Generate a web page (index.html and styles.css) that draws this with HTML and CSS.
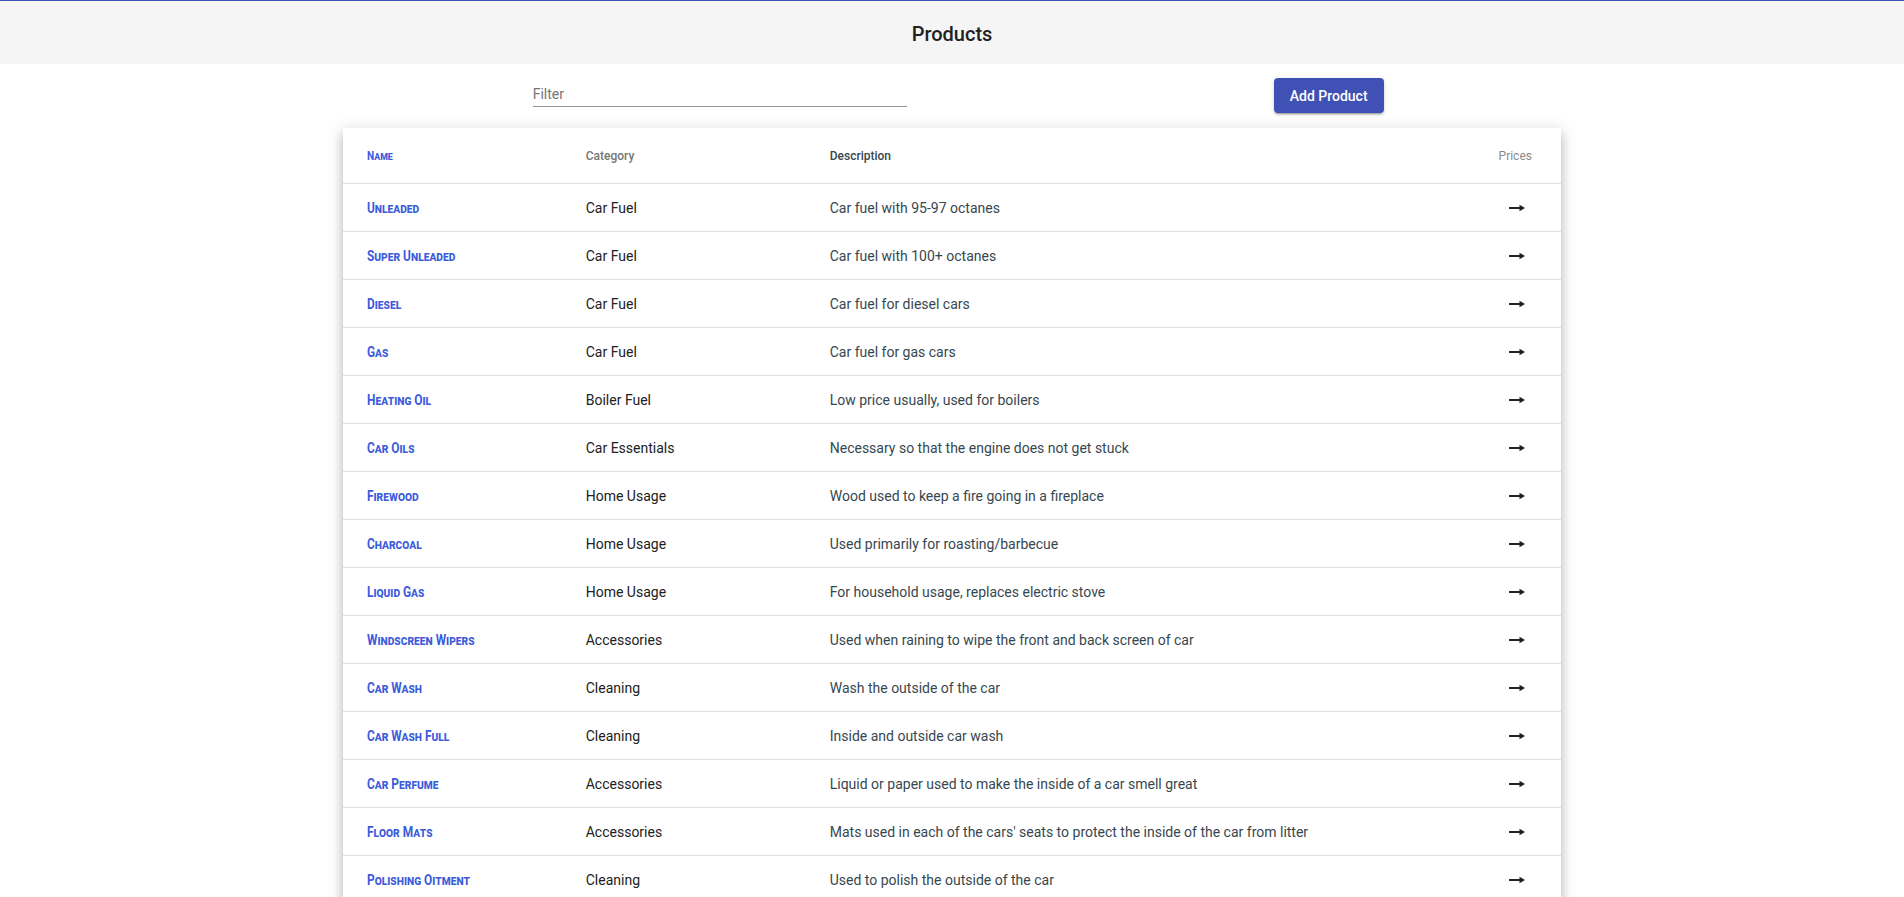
FILE: index.html
```html
<!DOCTYPE html>
<html lang="en">
<head>
<meta charset="utf-8">
<title>Products</title>
<link rel="stylesheet" href="styles.css">
</head>
<body>
<header class="topbar">
  <h1 class="title">Products</h1>
</header>
<div class="toolbar">
  <input class="filter" type="text" placeholder="Filter">
  <button class="add-btn" type="button">Add Product</button>
</div>
<div class="card">
  <div class="row head">
    <div class="c-name"><span class="nm">Name</span></div>
    <div class="c-cat">Category</div>
    <div class="c-desc">Description</div>
    <div class="c-price">Prices</div>
  </div>
  <div class="row"><div class="c-name"><span class="nm">Unleaded</span></div><div class="c-cat">Car Fuel</div><div class="c-desc">Car fuel with 95-97 octanes</div><div class="c-price"><svg class="arrow" viewBox="0 0 16 8"><path d="M0 4H12" /><polygon points="10.5,0.8 16,4 10.5,7.2"/></svg></div></div>
  <div class="row"><div class="c-name"><span class="nm">Super Unleaded</span></div><div class="c-cat">Car Fuel</div><div class="c-desc">Car fuel with 100+ octanes</div><div class="c-price"><svg class="arrow" viewBox="0 0 16 8"><path d="M0 4H12" /><polygon points="10.5,0.8 16,4 10.5,7.2"/></svg></div></div>
  <div class="row"><div class="c-name"><span class="nm">Diesel</span></div><div class="c-cat">Car Fuel</div><div class="c-desc">Car fuel for diesel cars</div><div class="c-price"><svg class="arrow" viewBox="0 0 16 8"><path d="M0 4H12" /><polygon points="10.5,0.8 16,4 10.5,7.2"/></svg></div></div>
  <div class="row"><div class="c-name"><span class="nm">Gas</span></div><div class="c-cat">Car Fuel</div><div class="c-desc">Car fuel for gas cars</div><div class="c-price"><svg class="arrow" viewBox="0 0 16 8"><path d="M0 4H12" /><polygon points="10.5,0.8 16,4 10.5,7.2"/></svg></div></div>
  <div class="row"><div class="c-name"><span class="nm">Heating Oil</span></div><div class="c-cat">Boiler Fuel</div><div class="c-desc">Low price usually, used for boilers</div><div class="c-price"><svg class="arrow" viewBox="0 0 16 8"><path d="M0 4H12" /><polygon points="10.5,0.8 16,4 10.5,7.2"/></svg></div></div>
  <div class="row"><div class="c-name"><span class="nm">Car Oils</span></div><div class="c-cat">Car Essentials</div><div class="c-desc">Necessary so that the engine does not get stuck</div><div class="c-price"><svg class="arrow" viewBox="0 0 16 8"><path d="M0 4H12" /><polygon points="10.5,0.8 16,4 10.5,7.2"/></svg></div></div>
  <div class="row"><div class="c-name"><span class="nm">Firewood</span></div><div class="c-cat">Home Usage</div><div class="c-desc">Wood used to keep a fire going in a fireplace</div><div class="c-price"><svg class="arrow" viewBox="0 0 16 8"><path d="M0 4H12" /><polygon points="10.5,0.8 16,4 10.5,7.2"/></svg></div></div>
  <div class="row"><div class="c-name"><span class="nm">Charcoal</span></div><div class="c-cat">Home Usage</div><div class="c-desc">Used primarily for roasting/barbecue</div><div class="c-price"><svg class="arrow" viewBox="0 0 16 8"><path d="M0 4H12" /><polygon points="10.5,0.8 16,4 10.5,7.2"/></svg></div></div>
  <div class="row"><div class="c-name"><span class="nm">Liquid Gas</span></div><div class="c-cat">Home Usage</div><div class="c-desc">For household usage, replaces electric stove</div><div class="c-price"><svg class="arrow" viewBox="0 0 16 8"><path d="M0 4H12" /><polygon points="10.5,0.8 16,4 10.5,7.2"/></svg></div></div>
  <div class="row"><div class="c-name"><span class="nm">Windscreen Wipers</span></div><div class="c-cat">Accessories</div><div class="c-desc">Used when raining to wipe the front and back screen of car</div><div class="c-price"><svg class="arrow" viewBox="0 0 16 8"><path d="M0 4H12" /><polygon points="10.5,0.8 16,4 10.5,7.2"/></svg></div></div>
  <div class="row"><div class="c-name"><span class="nm">Car Wash</span></div><div class="c-cat">Cleaning</div><div class="c-desc">Wash the outside of the car</div><div class="c-price"><svg class="arrow" viewBox="0 0 16 8"><path d="M0 4H12" /><polygon points="10.5,0.8 16,4 10.5,7.2"/></svg></div></div>
  <div class="row"><div class="c-name"><span class="nm">Car Wash Full</span></div><div class="c-cat">Cleaning</div><div class="c-desc">Inside and outside car wash</div><div class="c-price"><svg class="arrow" viewBox="0 0 16 8"><path d="M0 4H12" /><polygon points="10.5,0.8 16,4 10.5,7.2"/></svg></div></div>
  <div class="row"><div class="c-name"><span class="nm">Car Perfume</span></div><div class="c-cat">Accessories</div><div class="c-desc">Liquid or paper used to make the inside of a car smell great</div><div class="c-price"><svg class="arrow" viewBox="0 0 16 8"><path d="M0 4H12" /><polygon points="10.5,0.8 16,4 10.5,7.2"/></svg></div></div>
  <div class="row"><div class="c-name"><span class="nm">Floor Mats</span></div><div class="c-cat">Accessories</div><div class="c-desc">Mats used in each of the cars' seats to protect the inside of the car from litter</div><div class="c-price"><svg class="arrow" viewBox="0 0 16 8"><path d="M0 4H12" /><polygon points="10.5,0.8 16,4 10.5,7.2"/></svg></div></div>
  <div class="row"><div class="c-name"><span class="nm">Polishing Oitment</span></div><div class="c-cat">Cleaning</div><div class="c-desc">Used to polish the outside of the car</div><div class="c-price"><svg class="arrow" viewBox="0 0 16 8"><path d="M0 4H12" /><polygon points="10.5,0.8 16,4 10.5,7.2"/></svg></div></div>
</div>
</body>
</html>
```
FILE: styles.css
```css
html, body {
  margin: 0;
  padding: 0;
  background: #ffffff;
  font-family: Roboto, "Helvetica Neue", Arial, sans-serif;
  color: #212121;
}

.topbar {
  height: 63px;
  border-top: 1px solid #3f51b5;
  background: #f5f5f5;
  display: flex;
  align-items: center;
  justify-content: center;
}

.title {
  margin: 0;
  font-size: 20px;
  font-weight: 500;
  color: #212121;
  line-height: 24px;
  padding-top: 2px;
}

.toolbar {
  width: 64%;
  margin: 0 auto;
  height: 64px;
  box-sizing: border-box;
  padding-top: 14px;
  display: flex;
  align-items: flex-start;
}

.filter {
  margin-left: 190px;
  margin-top: 1px;
  width: 374px;
  height: 24px;
  box-sizing: content-box;
  padding: 3px 0 0 0;
  border: none;
  border-bottom: 1px solid #949494;
  outline: none;
  background: transparent;
  font-family: Roboto, Arial, sans-serif;
  font-size: 14px;
  color: #212121;
}

.filter::placeholder {
  color: #757575;
}

.add-btn {
  margin-left: 367px;
  height: 35px;
  padding: 0 16px;
  border: none;
  border-radius: 4px;
  background: #3f51b5;
  color: #ffffff;
  font-family: Roboto, Arial, sans-serif;
  font-size: 14px;
  font-weight: 500;
  box-shadow: 0 3px 1px -2px rgba(0,0,0,.2), 0 2px 2px 0 rgba(0,0,0,.14), 0 1px 5px 0 rgba(0,0,0,.12);
  cursor: pointer;
}

.card {
  width: 64%;
  margin: 0 auto;
  background: #ffffff;
  box-shadow: 0 5px 5px -3px rgba(0,0,0,.2), 0 8px 10px 1px rgba(0,0,0,.14), 0 3px 14px 2px rgba(0,0,0,.12);
}

.row {
  display: grid;
  grid-template-columns: 219px 244px 1fr 44px;
  align-items: center;
  height: 47px;
  padding: 0 24px;
  border-bottom: 1px solid #e0e0e0;
  font-size: 14px;
}

.row.head {
  height: 55px;
  font-size: 12px;
}

.c-name {
  font-variant: small-caps;
  font-weight: 700;
  color: #3b5bdb;
}

.nm {
  display: inline-block;
  transform: scaleX(0.85);
  transform-origin: left center;
  white-space: nowrap;
}

.c-cat {
  color: #212121;
}

.c-desc {
  color: #37474f;
}

.c-price {
  display: flex;
  justify-content: center;
  padding-left: 3px;
}

.head .c-name {
  font-size: 12px;
}

.head .c-cat {
  color: #757575;
  font-weight: 500;
}

.head .c-desc {
  color: #37474f;
  font-weight: 500;
}

.head .c-price {
  color: #8a8a8a;
  padding-left: 0;
}

.arrow {
  width: 16px;
  height: 8px;
  display: block;
}

.arrow path {
  stroke: #212121;
  stroke-width: 2;
  fill: none;
}

.arrow polygon {
  fill: #212121;
}
```
